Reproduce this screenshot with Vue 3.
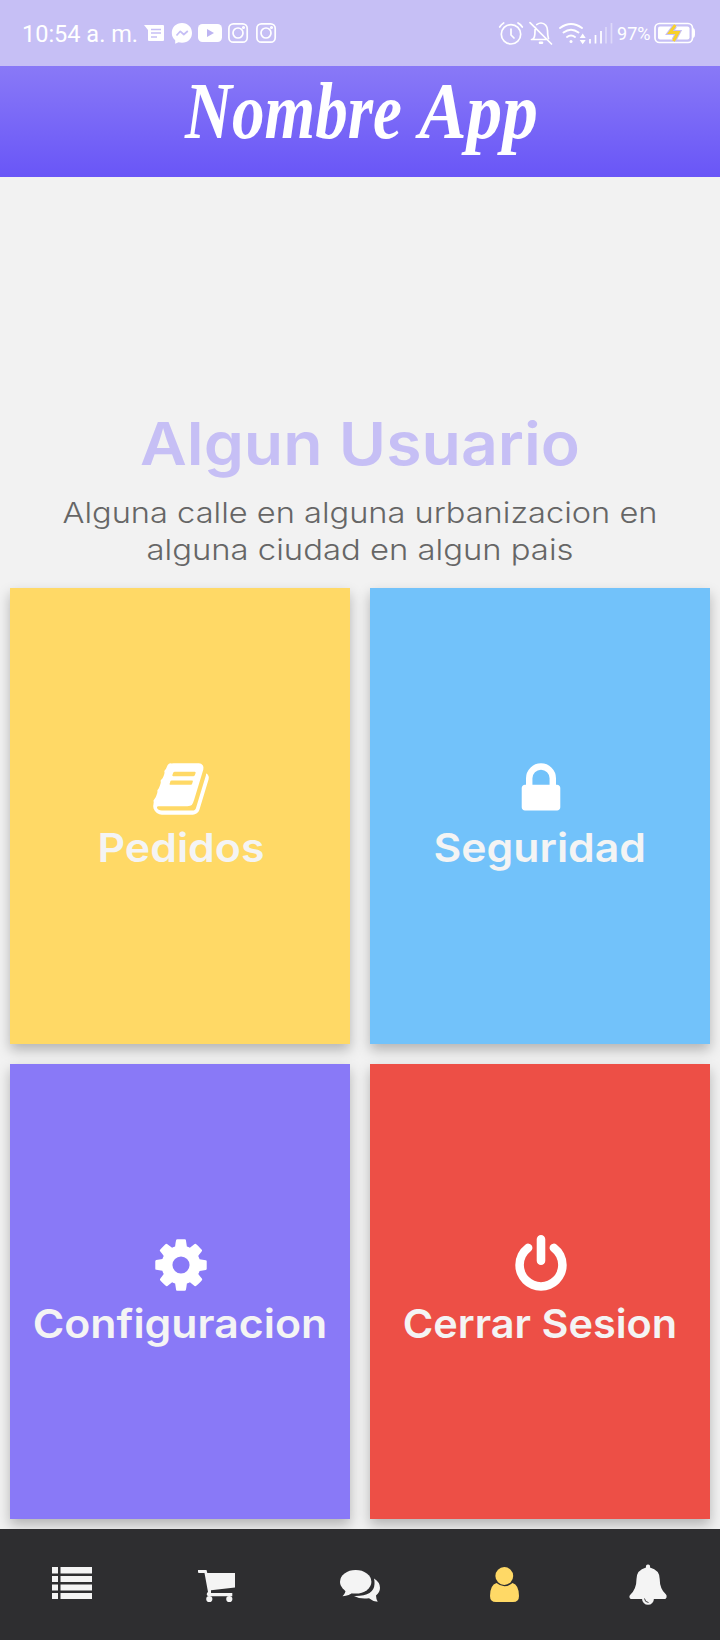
<script setup>
const cards = [
  {
    id: 'orders', label: 'Pedidos', left: 87.5, width: 167, view: '0 0 1792 1792',
    icon: 'M1703 478q40 57 18 129l-275 906q-19 64-76.5 107.5t-122.5 43.5h-923q-77 0-148.5-53.5t-99.5-131.5q-24-67-2-127 0-4 3-27t4-37q1-8-3-21.5t-3-19.5q2-11 8-21t16.5-23.5 16.5-23.5q23-38 45-91.5t30-91.5q3-10 .5-30t-.5-28q3-11 17-28t17-23q21-36 42-92t25-90q1-9-2.5-32t.5-28q4-13 22-30.5t22-22.5q19-26 42.5-84.5t27.5-96.5q1-8-3-25.5t-2-26.5q2-8 9-18t18-23 17-21q8-12 16.5-30.5t15-35 16-36 19.5-32 26.5-23.5 36-11.5 47.5 5.5l-1 3q38-9 51-9h761q74 0 114 56t18 130l-274 906q-36 119-71.5 153.5t-128.5 34.5h-869q-27 0-38 15-11 16-1 43 24 70 144 70h923q29 0 56-15.5t35-41.5l300-987q7-22 5-57 38 15 59 43zm-1064 2q-4 13 2 22.5t20 9.5h608q13 0 25.5-9.5t16.5-22.5l21-64q4-13-2-22.5t-20-9.5h-608q-13 0-25.5 9.5t-16.5 22.5zm-83 256q-4 13 2 22.5t20 9.5h608q13 0 25.5-9.5t16.5-22.5l21-64q4-13-2-22.5t-20-9.5h-608q-13 0-25.5 9.5t-16.5 22.5z'
  },
  {
    id: 'security', label: 'Seguridad', left: 63.5, width: 212.5, view: '0 0 1792 1792',
    icon: 'M640 768h512v-192q0-106-75-181t-181-75-181 75-75 181v192zm832 96v576q0 40-28 68t-68 28h-960q-40 0-68-28t-28-68v-576q0-40 28-68t68-28h32v-192q0-184 132-316t316-132 316 132 132 316v192h32q40 0 68 28t28 68z'
  },
  {
    id: 'settings', label: 'Configuracion', left: 22.7, width: 294.5, view: '0 0 1792 1792',
    icon: 'M1152 896q0-106-75-181t-181-75-181 75-75 181 75 181 181 75 181-75 75-181zm512-109v222q0 12-8 23t-20 13l-185 28q-19 54-39 91 35 50 107 138 10 12 10 25t-9 23q-27 37-99 108t-94 71q-12 0-26-9l-138-108q-44 23-91 38-16 136-29 186-7 28-36 28h-222q-14 0-24.5-8.5t-11.5-21.5l-28-184q-49-16-90-37l-141 107q-10 9-25 9-14 0-25-11-126-114-165-168-7-10-7-23 0-12 8-23 15-21 51-66.5t54-70.5q-27-50-41-99l-183-27q-13-2-21-12.5t-8-23.5v-222q0-12 8-23t19-13l186-28q14-46 39-92-40-57-107-138-10-12-10-24 0-10 9-23 26-36 98.5-107.5t94.5-71.5q13 0 26 10l138 107q44-23 91-38 16-136 29-186 7-28 36-28h222q14 0 24.5 8.5t11.5 21.5l28 184q49 16 90 37l142-107q9-9 24-9 13 0 25 10 129 119 165 170 7 8 7 22 0 12-8 23-15 21-51 66.5t-54 70.5q26 50 41 98l183 28q13 2 21 12.5t8 23.5z'
  },
  {
    id: 'logout', label: 'Cerrar Sesion', left: 32.7, width: 274.5, view: '0 0 1792 1792',
    icon: 'M1664 896q0 156-61 298t-164 245-245 164-298 61-298-61-245-164-164-245-61-298q0-182 80.5-343t226.5-270q43-32 95.5-25t83.5 50q32 42 24.5 94.5t-49.5 84.5q-98 74-151.5 181t-53.5 228q0 104 40.500 198.500t109.500 163.500 163.500 109.500 198.500 40.500 198.500-40.500 163.500-109.500 109.500-163.500 40.500-198.500q0-121-53.500-228t-151.500-181q-42-32-49.500-84.500t24.500-94.500q31-43 84-50t95 25q146 109 226.500 270t80.500 343zm-640-768v640q0 52-38 90t-90 38-90-38-38-90v-640q0-52 38-90t90-38 90 38 38 90z'
  }
]
</script>

<template>
  <div class="app">
    <header class="status">
      <svg width="300" height="66" viewBox="0 0 300 66">
        <text class="roboto" x="22" y="42" font-size="24" textLength="116" lengthAdjust="spacingAndGlyphs">10:54 a. m.</text>
        <!-- messages -->
        <path fill="#fff" d="M144 25h19q1 0 1 1v14q0 1-1 1h-14q-1 0-1-1v-10z" />
        <path class="cut" d="M151 29.500h10M151 33h10M151 37h6" />
        <!-- messenger -->
        <path fill="#fff" d="M182 23c-6 0-10.200 4.300-10.200 10 0 3 1.200 5.500 3.400 7.300v3.400l3.300-1.400c1 .3 2.200.5 3.500.5 6 0 10-4.200 10-9.800s-4-10-10-10z" />
        <path class="cut" stroke-linejoin="round" d="M176.500 35.500l3.800-4.200 3.500 3.200 4-3.500" />
        <!-- video -->
        <rect x="198" y="24" width="24" height="18" rx="4.500" fill="#fff" />
        <path fill="#bdb4f2" d="M207 29l7 4-7 4z" />
        <!-- camera -->
        <g v-for="x in [228, 256]" :key="x" fill="none" stroke="#fff" stroke-width="1.700">
          <rect :x="x + 0.900" y="23.900" width="18.300" height="18.300" rx="4.500" />
          <circle :cx="x + 10" cy="33" r="5" />
          <circle :cx="x + 15.500" cy="27.500" r="0.700" />
        </g>
      </svg>
      <svg width="240" height="66" viewBox="480 0 240 66">
        <g fill="none" stroke="#fff" stroke-width="1.700" stroke-linecap="round">
          <!-- alarm -->
          <circle cx="511" cy="34.300" r="9.700" />
          <path d="M511 29v6l3 3M499.700 27q1.500-2.500 4-4M518 23q2.700 1.500 4.300 4" />
          <!-- muted bell -->
          <path d="M530 22.700l21.500 21.300M531.500 39.500H547M533 39q2-1.500 2-8 0-2 .5-3.500M536.700 24.600Q539 23 541 23c4 0 6.500 3.500 6.500 7.500 0 4 .2 6 1 8" />
          <path d="M540 42.700h2" stroke-width="2.600" />
          <!-- wifi -->
          <path d="M560 28q11-8 22 0M563.500 32.500q7.500-5.500 15 0M567 37q4-3 8 0" stroke-width="2" />
        </g>
        <circle cx="571" cy="41.500" r="1.500" fill="#fff" />
        <path fill="#fff" d="M579.700 38l3-4.500 3 4.500zM579.700 40l3 4.300 3-4.300z" />
        <path stroke="#fff" stroke-width="1.700" d="M590 39v4.500M595.500 35v8.500M601 31v12.500" />
        <path stroke="#fff" stroke-opacity=".4" stroke-width="1.700" d="M606 27v16.500M611.500 23v20.500" />
        <text class="roboto" x="617" y="40.200" font-size="18" textLength="33.500" lengthAdjust="spacingAndGlyphs">97%</text>
        <!-- battery -->
        <rect x="655" y="23.500" width="37.500" height="19" rx="4.500" fill="none" stroke="#fff" stroke-width="1.700" />
        <rect x="658" y="26.500" width="31.500" height="13" rx="2" fill="#fff" />
        <path fill="#fff" d="M693 28q2 .5 2 3v4q0 2.500-2 3z" />
        <path fill="none" stroke="#c6bff5" stroke-width="5" d="M674.800 26l-4.800 6.500h8l-4 7.500" />
        <path fill="none" stroke="#f8d12a" stroke-width="3" d="M675.300 25l-5.300 7.500h8l-4.500 8.500" />
      </svg>
    </header>

    <div class="brand">
      <svg width="720" height="111" viewBox="0 0 720 111">
        <text class="logo" x="185" y="72" textLength="217" lengthAdjust="spacingAndGlyphs">Nombre</text>
        <text class="logo" x="419" y="72" textLength="119" lengthAdjust="spacingAndGlyphs">App</text>
      </svg>
    </div>

    <section class="profile">
      <svg width="720" height="190" viewBox="0 0 720 190">
        <text class="name" x="140" y="67" textLength="440" lengthAdjust="spacingAndGlyphs">Algun Usuario</text>
        <text class="address" x="62.500" y="125" textLength="595" lengthAdjust="spacingAndGlyphs">Alguna calle en alguna urbanizacion en</text>
        <text class="address" x="146.500" y="161.700" textLength="427" lengthAdjust="spacingAndGlyphs">alguna ciudad en algun pais</text>
      </svg>
    </section>

    <main class="cards">
      <button v-for="card in cards" :key="card.id" class="card" :class="card.id">
        <svg class="icon" :viewBox="card.view"><path :d="card.icon" /></svg>
        <svg class="label" width="340" height="54" viewBox="0 0 340 54">
          <text :x="card.left" y="43" :textLength="card.width" lengthAdjust="spacingAndGlyphs">{{ card.label }}</text>
        </svg>
      </button>
    </main>

    <nav class="tabs">
      <svg viewBox="0 0 48 48">
        <path d="M4 7h6v6.500H4zM12.500 7H44v6.500H12.500zM4 16h6v6H4zM12.500 16H44v6H12.500zM4 24.500h6v6H4zM12.500 24.500H44v6H12.500zM4 33h6v6H4zM12.500 33H44v6H12.500z" />
      </svg>
      <svg viewBox="0 0 48 48">
        <path d="M6 10h8.500l.8 3H43v14.500L19 30.300v2.700h21.300v3.300H16.500q-1.800-.3-1.800-2 0-1.500 1.300-2.300L12.500 13H7q-1 0-1-1z" />
        <circle cx="17.300" cy="39" r="3.100" /><circle cx="37.300" cy="39" r="3.100" />
      </svg>
      <svg viewBox="0 0 48 48">
        <ellipse cx="19.700" cy="21.800" rx="15.700" ry="11.800" />
        <path d="M9.500 29q.5 4-3 7.200 7-.5 10.500-4.200zM38 18.500q6 3.700 6 9.300 0 4.500-4 7.700 0 3 1.700 6.300-5-.3-8.700-3.500-9 1.200-15-2.300 20 .5 20.500-12 .2-3-.5-5.500z" />
      </svg>
      <svg class="active" viewBox="0 0 48 48">
        <circle cx="24.300" cy="16" r="8.900" />
        <path d="M16.500 23q8 6.500 16 0 6.500 2 6.500 13 0 6-6 6H16q-6 0-6-6 0-11 6.500-13z" />
      </svg>
      <svg viewBox="0 0 48 48">
        <path d="M22 7.500Q21.500 4.500 24 4.500T26 7.500Q35.700 10 35.700 19 35.700 29 42 34.500 43 35.700 42.500 37.500 42 39 40.500 39H7.500Q6 39 5.500 37.500 5 36 6.300 34.800 12.500 29 12.500 19 12.500 10 22 7.500z" />
        <path d="M18 38.500a6 6.300 0 0 0 12 0z" />
        <path d="M20.500 38.500q.3 3.700 4 4" fill="none" stroke="#2e2e30" stroke-width=".9" />
      </svg>
    </nav>
  </div>
</template>

<style>
body { background: #f2f2f2; }
</style>

<style scoped>
.app { width: 720px; height: 1640px; display: flex; flex-direction: column; overflow: hidden; background: #f2f2f2; }
svg { display: block; }
.status { height: 66px; flex: none; display: flex; justify-content: space-between; background: #c6bff5; }
.roboto { font-family: Roboto, sans-serif; fill: #fff; }
.cut { fill: none; stroke: #c6bff5; stroke-width: 1.700; }
.brand { height: 111px; flex: none; background: linear-gradient(#8979f7, #6956f7); }
.logo { font-family: "Liberation Serif", serif; font-style: italic; font-weight: 700; font-size: 80px; fill: #fff; }
.profile { height: 411px; flex: none; display: flex; align-items: flex-end; }
.name, .address, .label text { font-family: Inter, "Open Sans", sans-serif; }
.name { font-size: 59px; font-weight: 600; fill: #c6bff5; }
.address { font-size: 28.500px; font-weight: 300; fill: #666; }
.cards { flex: none; height: 941px; box-sizing: border-box; padding: 0 10px 10px; display: grid; grid-template-columns: 340px 340px; grid-template-rows: 456px 455px; gap: 20px; }
.card { border: 0; padding: 170.500px 0 0; display: flex; flex-direction: column; align-items: center; box-shadow: 0 6px 12px rgba(0, 0, 0, .26); }
.icon { width: 60px; height: 60px; margin-left: 1px; fill: #fff; }
.label text { font-size: 39.500px; font-weight: 600; fill: #f4f4f4; }
.label { margin-top: .5px; }
.orders { background: #ffd966; }
.security { background: #72c2fa; }
.settings { background: #8979f7; }
.logout { background: #ed4f46; }
.tabs { position: relative; height: 111px; flex: none; box-sizing: border-box; padding-top: 31px; display: grid; grid-template-columns: repeat(5, 1fr); justify-items: center; background: #2e2e30; fill: #f4f4f4; }
.tabs svg { width: 48px; height: 48px; }
.tabs .active { fill: #ffd966; }
</style>
